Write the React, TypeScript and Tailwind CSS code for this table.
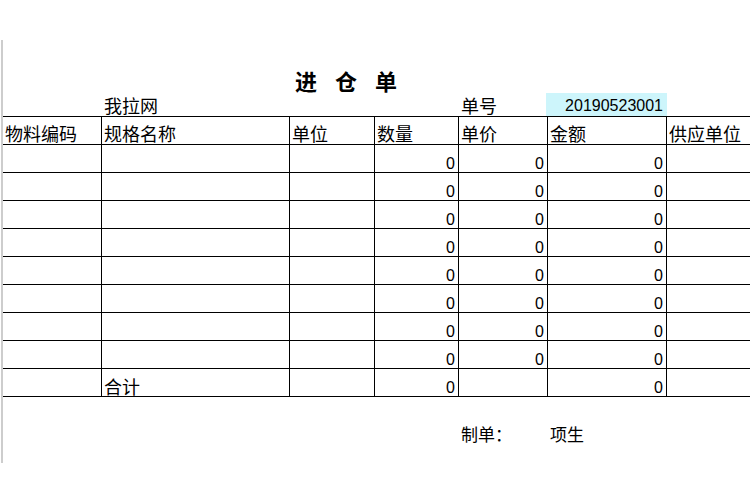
const cjk = "font-['Noto_Sans_CJK_SC',sans-serif]";
const num = "font-['Liberation_Sans',Arial,sans-serif]";

const cols = "grid grid-cols-[99px_188px_85px_84px_89px_119px_1fr]";

const headers = ["物料编码", "规格名称", "单位", "数量", "单价", "金额", "供应单位"];

type Row = { label?: string; qty?: string; price?: string; amount?: string };

const rows: Row[] = [
  ...Array.from({ length: 8 }, () => ({ qty: "0", price: "0", amount: "0" })),
  { label: "合计", qty: "0", amount: "0" },
];

function TextCell({ text, last }: { text?: string; last?: boolean }) {
  return (
    <div
      className={`h-[28px] border-b border-black pl-[2px] pt-[7px] text-[18px] leading-[18px] whitespace-nowrap ${cjk} ${
        last ? "" : "border-r"
      }`}
    >
      {text}
    </div>
  );
}

function NumCell({ value }: { value?: string }) {
  return (
    <div
      className={`h-[28px] border-b border-r border-black pr-[3px] pt-[11px] text-right text-[16px] leading-[16px] ${num}`}
    >
      {value}
    </div>
  );
}

export default function App() {
  return (
    <div className="w-[750px] h-[501px] overflow-hidden bg-white pt-[40px] text-black">
      <div className="ml-px h-[423px] border-l-2 border-[#cdcdcd]">
        {/* title */}
        <div className="h-[52px] pt-[29px] pl-[292px]">
          <div className={`flex gap-[18px] text-[22px] leading-[22px] font-bold ${cjk}`}>
            <span>进</span>
            <span>仓</span>
            <span>单</span>
          </div>
        </div>

        {/* supplier / order no. */}
        <div className={`${cols} h-[24px]`}>
          <div />
          <div className={`pl-[2px] pt-[4px] text-[18px] leading-[18px] ${cjk}`}>我拉网</div>
          <div />
          <div />
          <div className={`pl-[2px] pt-[4px] text-[18px] leading-[18px] ${cjk}`}>单号</div>
          <div className="-ml-[2px]">
            <div className={`mt-[1px] h-[23px] bg-[#cdf5fb] pr-[4px] pt-[5px] text-right text-[16px] leading-[16px] ${num}`}>
              20190523001
            </div>
          </div>
          <div />
        </div>

        {/* table */}
        <div className={`${cols} border-t border-black`}>
          {headers.map((h, i) => (
            <TextCell key={h} text={h} last={i === headers.length - 1} />
          ))}
          {rows.map((r, i) => (
            <div key={i} className="contents">
              <TextCell />
              <div
                className={`h-[28px] border-b border-r border-black pl-[2px] pt-[8px] text-[18px] leading-[18px] ${cjk}`}
              >
                {r.label}
              </div>
              <TextCell />
              <NumCell value={r.qty} />
              <NumCell value={r.price} />
              <NumCell value={r.amount} />
              <TextCell last />
            </div>
          ))}
        </div>

        {/* footer */}
        <div className={`${cols} pt-[28px] text-[17px] leading-[17px] ${cjk}`}>
          <div />
          <div />
          <div />
          <div />
          <div className="pl-[2px]">制单：</div>
          <div className="pl-[2px]">项生</div>
          <div />
        </div>
      </div>
    </div>
  );
}
